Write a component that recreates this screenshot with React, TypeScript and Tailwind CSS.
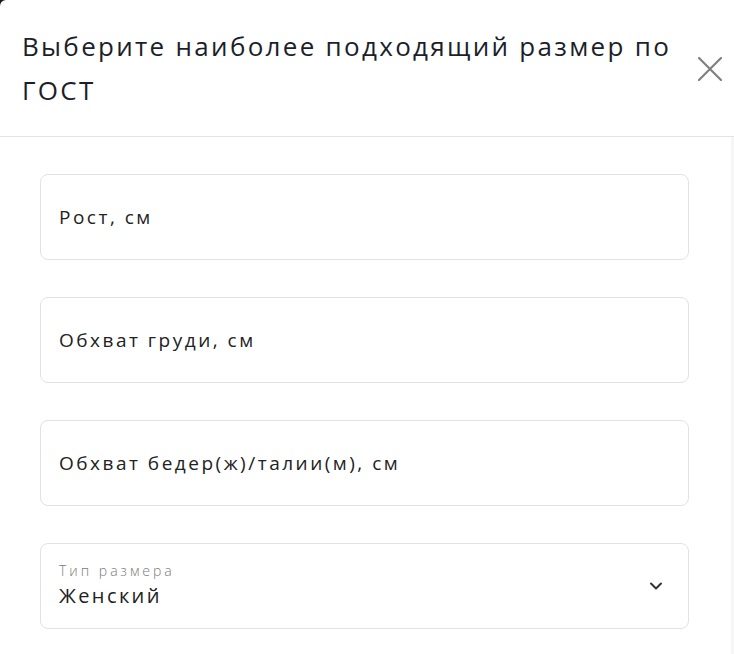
import { ChevronDown } from 'lucide-react';

const fields = ['Рост, см', 'Обхват груди, см', 'Обхват бедер(ж)/талии(м), см'];

export default function App() {
    return (
        <div className="min-h-screen bg-[#1a1a1a]" style={{ fontFamily: '"Open Sans", Roboto, sans-serif' }}>
            <div className="flex min-h-screen w-full flex-col rounded-tl-[6px] bg-white">
                <div className="flex items-center justify-between border-b border-[#e3e3e3] pl-[22px] pr-[12px] h-[137px]">
                    <h2 className="max-w-[670px] text-[26px] leading-[44px] font-normal tracking-[2.3px] text-[#1c1f2a]">
                        Выберите наиболее подходящий размер по ГОСТ
                    </h2>
                    <button className="mt-[2px] flex h-[24px] w-[24px] items-center justify-center">
                        <svg viewBox="0 0 24 24" className="h-[24px] w-[24px]" fill="none" stroke="#808080" strokeWidth="2.2" strokeLinecap="round">
                            <path d="M1 1L23 23M23 1L1 23" />
                        </svg>
                    </button>
                </div>
                <div className="flex flex-1">
                    <div className="flex flex-1 flex-col gap-[37px] pt-[37px] pl-[40px] pr-[42px]">
                        {fields.map((f) => (
                            <div key={f} className="flex h-[86px] items-center rounded-[8px] border border-[#e2e2e2] px-[18px]">
                                <span className="text-[19px] tracking-[2.5px] text-[#222]">{f}</span>
                            </div>
                        ))}
                        <div className="flex h-[86px] items-center justify-between rounded-[8px] border border-[#e2e2e2] pl-[18px] pr-[22px]">
                            <div className="flex flex-col">
                                <span className="text-[14px] leading-[20px] font-light tracking-[3px] text-[#7a7a7a]">Тип размера</span>
                                <span className="text-[20px] leading-[30px] tracking-[2.4px] text-[#222]">Женский</span>
                            </div>
                            <ChevronDown className="h-[20px] w-[20px] text-[#333]" strokeWidth={2.4} />
                        </div>
                    </div>
                    <div className="w-[3px] bg-[#f6f6f6]" />
                </div>
            </div>
        </div>
    );
}
